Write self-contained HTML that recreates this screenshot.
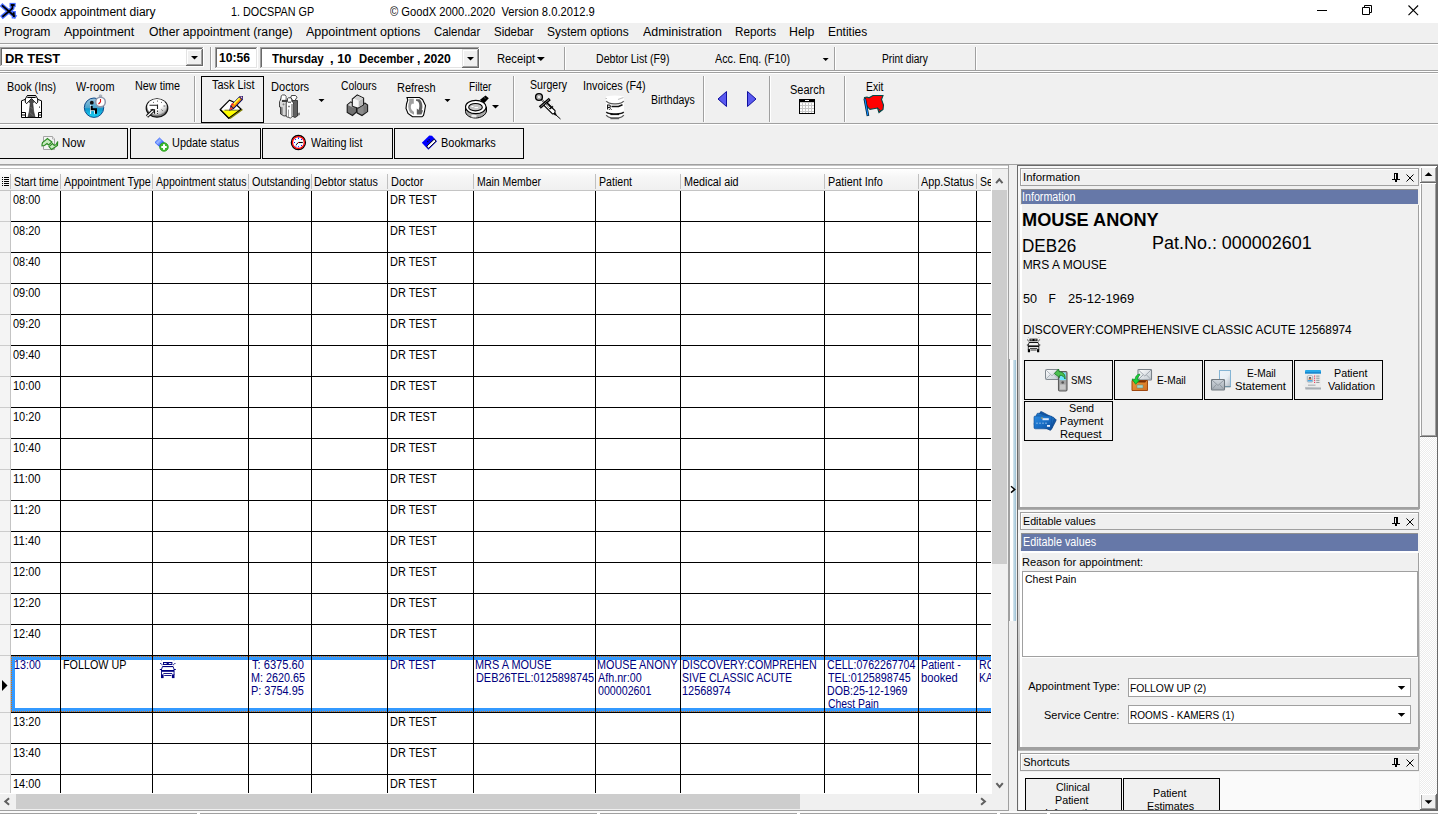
<!DOCTYPE html>
<html><head><meta charset="utf-8"><title>Goodx appointment diary</title>
<style>
html,body{margin:0;padding:0;background:#f0f0f0;overflow:hidden}
#r{position:relative;width:1438px;height:814px;overflow:hidden;background:#f0f0f0;font-family:"Liberation Sans",sans-serif;color:#000}
#r div,#r span,#r svg{position:absolute;display:block}
#r span{white-space:pre;transform-origin:0 0}
</style></head><body><div id="r">
<div style="left:0px;top:0px;width:1438px;height:23px;background:#fff;"></div>
<svg style="left:0px;top:0px" width="18" height="22" viewBox="0 0 18 22" fill="none" stroke-linecap="square" stroke-linejoin="miter">
<g stroke="#3a62ff" stroke-width="4.200" opacity=".92"><path d="M2.600 6 14.300 16M3 16.200 10.800 9.800 12.300 8.300 12.600 5.200M13.800 13V16.300"/><path d="M11.600 5h2" /></g>
<g stroke="#000" stroke-width="1.700"><path d="M2.600 6 14.300 16M3 16.200 10.800 9.800 12.300 8.300 12.600 5.500M13.800 13.200V16.200"/><path d="M11.700 5h2" stroke-width="1.900"/></g>
</svg>
<span style="left:21.05px;top:6px;font-size:12px;line-height:12px;transform:scaleX(1.0040);">Goodx appointment diary</span>
<span style="left:231.03px;top:6px;font-size:12px;line-height:12px;transform:scaleX(0.8988);">1. DOCSPAN GP</span>
<span style="left:389.89px;top:6px;font-size:12px;line-height:12px;transform:scaleX(0.9320);">© GoodX 2000..2020  Version 8.0.2012.9</span>
<svg style="left:1310px;top:0px" width="128" height="23" viewBox="0 0 128 23" fill="none" stroke="#000" stroke-width="1">
<path d="M7 10.5H17"/>
<path d="M52.5 7.5h7v7h-7z M54.5 7.5v-2h7v7h-2"/>
<path d="M98.5 5.5l9.600 9.600M108.100 5.5l-9.600 9.600" stroke-width="1.1"/>
</svg>
<div style="left:0px;top:23px;width:1438px;height:20px;background:#f0f0f0;"></div>
<div style="left:0px;top:43px;width:1438px;height:1px;background:#a0a0a0;"></div>
<div style="left:0px;top:44px;width:1438px;height:1px;background:#fff;"></div>
<span style="left:3.61px;top:26px;font-size:12px;line-height:12px;transform:scaleX(1.0097);">Program</span>
<span style="left:63.70px;top:26px;font-size:12px;line-height:12px;transform:scaleX(1.0430);">Appointment</span>
<span style="left:148.74px;top:26px;font-size:12px;line-height:12px;transform:scaleX(1.0149);">Other appointment (range)</span>
<span style="left:306.20px;top:26px;font-size:12px;line-height:12px;transform:scaleX(1.0456);">Appointment options</span>
<span style="left:433.67px;top:26px;font-size:12px;line-height:12px;transform:scaleX(0.9494);">Calendar</span>
<span style="left:494.10px;top:26px;font-size:12px;line-height:12px;transform:scaleX(0.9570);">Sidebar</span>
<span style="left:547.49px;top:26px;font-size:12px;line-height:12px;transform:scaleX(0.9950);">System options</span>
<span style="left:643.20px;top:26px;font-size:12px;line-height:12px;transform:scaleX(1.0373);">Administration</span>
<span style="left:734.72px;top:26px;font-size:12px;line-height:12px;transform:scaleX(0.9769);">Reports</span>
<span style="left:789.04px;top:26px;font-size:12px;line-height:12px;transform:scaleX(1.0272);">Help</span>
<span style="left:827.68px;top:26px;font-size:12px;line-height:12px;transform:scaleX(0.9954);">Entities</span>
<div style="left:0px;top:45px;width:1438px;height:25px;background:#f0f0f0;"></div>
<div style="left:0px;top:70px;width:1438px;height:1px;background:#a0a0a0;"></div>
<div style="left:0px;top:71px;width:1438px;height:1px;background:#fff;"></div>
<div style="left:0px;top:72px;width:1438px;height:1px;background:#a0a0a0;"></div>
<div style="left:0px;top:73px;width:1438px;height:1px;background:#fff;"></div>
<div style="left:0px;top:47px;width:204px;height:20px;background:#fff;"></div>
<div style="left:0px;top:47px;width:203px;height:19px;background:#a0a0a0;"></div>
<div style="left:1px;top:48px;width:202px;height:18px;background:#e3e3e3;"></div>
<div style="left:1px;top:48px;width:201px;height:17px;background:#696969;"></div>
<div style="left:2px;top:49px;width:200px;height:16px;background:#fff;"></div>
<div style="left:186px;top:49px;width:17px;height:17px;background:#696969;"></div>
<div style="left:186px;top:49px;width:16px;height:16px;background:#e3e3e3;"></div>
<div style="left:187px;top:50px;width:15px;height:15px;background:#a0a0a0;"></div>
<div style="left:187px;top:50px;width:14px;height:14px;background:#fff;"></div>
<div style="left:188px;top:51px;width:13px;height:13px;background:#f0f0f0;"></div>
<span style="left:4.90px;top:52px;font-size:13px;line-height:13px;font-weight:700;transform:scaleX(0.9935);">DR TEST</span>
<div style="left:210px;top:47px;width:1px;height:23px;background:#a0a0a0;"></div>
<div style="left:211px;top:47px;width:1px;height:23px;background:#fff;"></div>
<div style="left:215px;top:47px;width:43px;height:22px;background:#fff;"></div>
<div style="left:215px;top:47px;width:42px;height:21px;background:#a0a0a0;"></div>
<div style="left:216px;top:48px;width:41px;height:20px;background:#e3e3e3;"></div>
<div style="left:216px;top:48px;width:40px;height:19px;background:#696969;"></div>
<div style="left:217px;top:49px;width:39px;height:18px;background:#fff;"></div>
<span style="left:218.67px;top:52px;font-size:12px;line-height:12px;font-weight:700;transform:scaleX(1.0117);">10:56</span>
<div style="left:260px;top:47px;width:220px;height:22px;background:#fff;"></div>
<div style="left:260px;top:47px;width:219px;height:21px;background:#a0a0a0;"></div>
<div style="left:261px;top:48px;width:218px;height:20px;background:#e3e3e3;"></div>
<div style="left:261px;top:48px;width:217px;height:19px;background:#696969;"></div>
<div style="left:262px;top:49px;width:216px;height:18px;background:#fff;"></div>
<div style="left:462px;top:49px;width:17px;height:19px;background:#696969;"></div>
<div style="left:462px;top:49px;width:16px;height:18px;background:#e3e3e3;"></div>
<div style="left:463px;top:50px;width:15px;height:17px;background:#a0a0a0;"></div>
<div style="left:463px;top:50px;width:14px;height:16px;background:#fff;"></div>
<div style="left:464px;top:51px;width:13px;height:15px;background:#f0f0f0;"></div>
<span style="left:272.19px;top:53px;font-size:12px;line-height:12px;font-weight:700;transform:scaleX(0.9576);">Thursday</span>
<span style="left:329.86px;top:53px;font-size:12px;line-height:12px;font-weight:700;transform:scaleX(1.0737);">, 10</span>
<span style="left:359.21px;top:53px;font-size:12px;line-height:12px;font-weight:700;transform:scaleX(0.9470);">December</span>
<span style="left:417.46px;top:53px;font-size:12px;line-height:12px;font-weight:700;transform:scaleX(1.0142);">, 2020</span>
<span style="left:496.79px;top:53px;font-size:12px;line-height:12px;transform:scaleX(0.9369);">Receipt</span>
<div style="left:564px;top:47px;width:1px;height:23px;background:#a0a0a0;"></div>
<div style="left:565px;top:47px;width:1px;height:23px;background:#fff;"></div>
<span style="left:595.89px;top:53px;font-size:12px;line-height:12px;transform:scaleX(0.8813);">Debtor List (F9)</span>
<span style="left:715.20px;top:53px;font-size:12px;line-height:12px;transform:scaleX(0.8999);">Acc. Enq. (F10)</span>
<div style="left:834px;top:47px;width:1px;height:23px;background:#a0a0a0;"></div>
<div style="left:835px;top:47px;width:1px;height:23px;background:#fff;"></div>
<span style="left:882.02px;top:53px;font-size:12px;line-height:12px;transform:scaleX(0.8483);">Print diary</span>
<div style="left:975px;top:47px;width:1px;height:23px;background:#a0a0a0;"></div>
<div style="left:976px;top:47px;width:1px;height:23px;background:#fff;"></div>
<div style="left:0px;top:74px;width:1438px;height:49px;background:#f0f0f0;"></div>
<div style="left:0px;top:123px;width:1438px;height:1px;background:#a0a0a0;"></div>
<div style="left:0px;top:124px;width:1438px;height:1px;background:#fff;"></div>
<div style="left:0px;top:125px;width:1438px;height:39px;background:#f0f0f0;"></div>
<div style="left:194px;top:76px;width:1px;height:46px;background:#a0a0a0;"></div>
<div style="left:195px;top:76px;width:1px;height:46px;background:#fff;"></div>
<div style="left:513px;top:76px;width:1px;height:46px;background:#a0a0a0;"></div>
<div style="left:514px;top:76px;width:1px;height:46px;background:#fff;"></div>
<div style="left:703px;top:76px;width:1px;height:46px;background:#a0a0a0;"></div>
<div style="left:704px;top:76px;width:1px;height:46px;background:#fff;"></div>
<div style="left:769px;top:76px;width:1px;height:46px;background:#a0a0a0;"></div>
<div style="left:770px;top:76px;width:1px;height:46px;background:#fff;"></div>
<div style="left:844px;top:76px;width:1px;height:46px;background:#a0a0a0;"></div>
<div style="left:845px;top:76px;width:1px;height:46px;background:#fff;"></div>
<div style="left:201px;top:76px;width:61px;height:45px;background:#f0f0f0;border:1px solid #000;"></div>
<span style="left:7.38px;top:81px;font-size:12px;line-height:12px;transform:scaleX(0.8983);">Book (Ins)</span>
<span style="left:76.20px;top:81px;font-size:12px;line-height:12px;transform:scaleX(0.9067);">W-room</span>
<span style="left:135.36px;top:80px;font-size:12px;line-height:12px;transform:scaleX(0.9009);">New time</span>
<span style="left:212.20px;top:79px;font-size:12px;line-height:12px;transform:scaleX(0.9085);">Task List</span>
<span style="left:270.81px;top:81px;font-size:12px;line-height:12px;transform:scaleX(0.9223);">Doctors</span>
<span style="left:341.36px;top:80px;font-size:12px;line-height:12px;transform:scaleX(0.8615);">Colours</span>
<span style="left:396.84px;top:82px;font-size:12px;line-height:12px;transform:scaleX(0.9165);">Refresh</span>
<span style="left:468.53px;top:81px;font-size:12px;line-height:12px;transform:scaleX(0.8415);">Filter</span>
<span style="left:529.73px;top:79px;font-size:12px;line-height:12px;transform:scaleX(0.8790);">Surgery</span>
<span style="left:583.08px;top:80px;font-size:12px;line-height:12px;transform:scaleX(0.9032);">Invoices (F4)</span>
<span style="left:650.90px;top:94px;font-size:12px;line-height:12px;transform:scaleX(0.8768);">Birthdays</span>
<span style="left:789.62px;top:84px;font-size:12px;line-height:12px;transform:scaleX(0.9144);">Search</span>
<span style="left:865.91px;top:81px;font-size:12px;line-height:12px;transform:scaleX(0.8678);">Exit</span>
<svg style="left:715px;top:88px" width="46" height="22" viewBox="0 0 46 22">
<polygon points="11.5,3.5 11.5,18.5 3,11" fill="#5a5af0" stroke="#1010a0" stroke-width="1"/>
<polygon points="32.5,3.5 32.5,18.5 41,11" fill="#5a5af0" stroke="#1010a0" stroke-width="1"/></svg>
<div style="left:-1px;top:128px;width:127px;height:29px;background:#f0f0f0;border:1px solid #000;"></div>
<div style="left:130px;top:128px;width:129px;height:29px;background:#f0f0f0;border:1px solid #000;"></div>
<div style="left:262px;top:128px;width:129px;height:29px;background:#f0f0f0;border:1px solid #000;"></div>
<div style="left:394px;top:128px;width:128px;height:29px;background:#f0f0f0;border:1px solid #000;"></div>
<span style="left:61.76px;top:137px;font-size:12px;line-height:12px;transform:scaleX(0.9548);">Now</span>
<span style="left:171.52px;top:137px;font-size:12px;line-height:12px;transform:scaleX(0.9091);">Update status</span>
<span style="left:311.20px;top:137px;font-size:12px;line-height:12px;transform:scaleX(0.8934);">Waiting list</span>
<span style="left:440.86px;top:137px;font-size:12px;line-height:12px;transform:scaleX(0.9115);">Bookmarks</span>
<div style="left:0px;top:164px;width:1438px;height:1px;background:#a0a0a0;"></div>
<div style="left:0px;top:165px;width:1438px;height:1px;background:#c4c4c4;"></div>
<div style="left:0px;top:166px;width:1438px;height:1px;background:#fff;"></div>
<div style="left:0px;top:167px;width:1438px;height:1px;background:#fff;"></div>
<div style="left:0px;top:168px;width:1008px;height:642px;background:#fff;"></div>
<div style="left:0px;top:168px;width:1008px;height:1px;background:#c0c0c0;"></div>
<div style="left:0;top:169px;width:991px;height:21px;background:linear-gradient(#fff,#f6f6f6 40%,#f0f0f0)"></div>
<div style="left:0px;top:190px;width:991px;height:1px;background:#c4c4c4;"></div>
<div style="left:10px;top:174px;width:1px;height:15px;background:#c0c0c0;"></div>
<div style="left:60px;top:174px;width:1px;height:15px;background:#c0c0c0;"></div>
<div style="left:152px;top:174px;width:1px;height:15px;background:#c0c0c0;"></div>
<div style="left:248px;top:174px;width:1px;height:15px;background:#c0c0c0;"></div>
<div style="left:311px;top:174px;width:1px;height:15px;background:#c0c0c0;"></div>
<div style="left:387px;top:174px;width:1px;height:15px;background:#c0c0c0;"></div>
<div style="left:473px;top:174px;width:1px;height:15px;background:#c0c0c0;"></div>
<div style="left:595px;top:174px;width:1px;height:15px;background:#c0c0c0;"></div>
<div style="left:680px;top:174px;width:1px;height:15px;background:#c0c0c0;"></div>
<div style="left:824px;top:174px;width:1px;height:15px;background:#c0c0c0;"></div>
<div style="left:918px;top:174px;width:1px;height:15px;background:#c0c0c0;"></div>
<div style="left:976px;top:174px;width:1px;height:15px;background:#c0c0c0;"></div>
<svg style="left:1px;top:177px" width="8" height="9" viewBox="0 0 8 9" shape-rendering="crispEdges"><g fill="#000">
<rect x="1" y="0" width="1" height="1"/><rect x="3" y="0" width="5" height="1"/>
<rect x="1" y="2" width="1" height="1"/><rect x="3" y="2" width="5" height="1"/>
<rect x="1" y="4" width="1" height="1"/><rect x="3" y="4" width="5" height="1"/>
<rect x="1" y="6" width="1" height="1"/><rect x="3" y="6" width="5" height="1"/>
<rect x="1" y="8" width="1" height="1"/><rect x="3" y="8" width="5" height="1"/></g></svg>
<span style="left:13.74px;top:176px;font-size:12px;line-height:12px;transform:scaleX(0.8701);">Start time</span>
<span style="left:64.20px;top:176px;font-size:12px;line-height:12px;transform:scaleX(0.8997);">Appointment Type</span>
<span style="left:156.20px;top:176px;font-size:12px;line-height:12px;transform:scaleX(0.8807);">Appointment status</span>
<span style="left:251.96px;top:176px;font-size:12px;line-height:12px;transform:scaleX(0.8994);">Outstanding</span>
<span style="left:314.37px;top:176px;font-size:12px;line-height:12px;transform:scaleX(0.8932);">Debtor status</span>
<span style="left:390.85px;top:176px;font-size:12px;line-height:12px;transform:scaleX(0.9142);">Doctor</span>
<span style="left:477.47px;top:176px;font-size:12px;line-height:12px;transform:scaleX(0.8720);">Main Member</span>
<span style="left:598.92px;top:176px;font-size:12px;line-height:12px;transform:scaleX(0.8839);">Patient</span>
<span style="left:684.37px;top:176px;font-size:12px;line-height:12px;transform:scaleX(0.8997);">Medical aid</span>
<span style="left:827.86px;top:176px;font-size:12px;line-height:12px;transform:scaleX(0.9018);">Patient Info</span>
<span style="left:921.20px;top:176px;font-size:12px;line-height:12px;transform:scaleX(0.9018);">App.Status</span>
<div style="left:0;top:0;width:1438px;height:814px;clip-path:polygon(977px 170px,991px 170px,991px 190px,977px 190px)">
<span style="left:979.73px;top:176px;font-size:12px;line-height:12px;transform:scaleX(0.8682);">Service</span>
</div>
<div style="left:0px;top:191px;width:10px;height:602px;background:#f4f4f4;"></div>
<div style="left:10px;top:191px;width:1px;height:602px;background:#c4c4c4;"></div>
<span style="left:13.20px;top:194px;font-size:12px;line-height:12px;transform:scaleX(0.9095);">08:00</span>
<span style="left:389.85px;top:194px;font-size:12px;line-height:12px;transform:scaleX(0.9112);">DR TEST</span>
<div style="left:11px;top:221px;width:980px;height:1px;background:#000;"></div>
<div style="left:0px;top:221px;width:10px;height:1px;background:#cccccc;"></div>
<span style="left:13.20px;top:225px;font-size:12px;line-height:12px;transform:scaleX(0.9095);">08:20</span>
<span style="left:389.85px;top:225px;font-size:12px;line-height:12px;transform:scaleX(0.9112);">DR TEST</span>
<div style="left:11px;top:252px;width:980px;height:1px;background:#000;"></div>
<div style="left:0px;top:252px;width:10px;height:1px;background:#cccccc;"></div>
<span style="left:13.20px;top:256px;font-size:12px;line-height:12px;transform:scaleX(0.9095);">08:40</span>
<span style="left:389.85px;top:256px;font-size:12px;line-height:12px;transform:scaleX(0.9112);">DR TEST</span>
<div style="left:11px;top:283px;width:980px;height:1px;background:#000;"></div>
<div style="left:0px;top:283px;width:10px;height:1px;background:#cccccc;"></div>
<span style="left:13.20px;top:287px;font-size:12px;line-height:12px;transform:scaleX(0.9095);">09:00</span>
<span style="left:389.85px;top:287px;font-size:12px;line-height:12px;transform:scaleX(0.9112);">DR TEST</span>
<div style="left:11px;top:314px;width:980px;height:1px;background:#000;"></div>
<div style="left:0px;top:314px;width:10px;height:1px;background:#cccccc;"></div>
<span style="left:13.20px;top:318px;font-size:12px;line-height:12px;transform:scaleX(0.9095);">09:20</span>
<span style="left:389.85px;top:318px;font-size:12px;line-height:12px;transform:scaleX(0.9112);">DR TEST</span>
<div style="left:11px;top:345px;width:980px;height:1px;background:#000;"></div>
<div style="left:0px;top:345px;width:10px;height:1px;background:#cccccc;"></div>
<span style="left:13.20px;top:349px;font-size:12px;line-height:12px;transform:scaleX(0.9095);">09:40</span>
<span style="left:389.85px;top:349px;font-size:12px;line-height:12px;transform:scaleX(0.9112);">DR TEST</span>
<div style="left:11px;top:376px;width:980px;height:1px;background:#000;"></div>
<div style="left:0px;top:376px;width:10px;height:1px;background:#cccccc;"></div>
<span style="left:12.52px;top:380px;font-size:12px;line-height:12px;transform:scaleX(0.9169);">10:00</span>
<span style="left:389.85px;top:380px;font-size:12px;line-height:12px;transform:scaleX(0.9112);">DR TEST</span>
<div style="left:11px;top:407px;width:980px;height:1px;background:#000;"></div>
<div style="left:0px;top:407px;width:10px;height:1px;background:#cccccc;"></div>
<span style="left:12.52px;top:411px;font-size:12px;line-height:12px;transform:scaleX(0.9169);">10:20</span>
<span style="left:389.85px;top:411px;font-size:12px;line-height:12px;transform:scaleX(0.9112);">DR TEST</span>
<div style="left:11px;top:438px;width:980px;height:1px;background:#000;"></div>
<div style="left:0px;top:438px;width:10px;height:1px;background:#cccccc;"></div>
<span style="left:12.52px;top:442px;font-size:12px;line-height:12px;transform:scaleX(0.9169);">10:40</span>
<span style="left:389.85px;top:442px;font-size:12px;line-height:12px;transform:scaleX(0.9112);">DR TEST</span>
<div style="left:11px;top:469px;width:980px;height:1px;background:#000;"></div>
<div style="left:0px;top:469px;width:10px;height:1px;background:#cccccc;"></div>
<span style="left:13.40px;top:473px;font-size:12px;line-height:12px;transform:scaleX(0.9450);">11:00</span>
<span style="left:389.85px;top:473px;font-size:12px;line-height:12px;transform:scaleX(0.9112);">DR TEST</span>
<div style="left:11px;top:500px;width:980px;height:1px;background:#000;"></div>
<div style="left:0px;top:500px;width:10px;height:1px;background:#cccccc;"></div>
<span style="left:13.40px;top:504px;font-size:12px;line-height:12px;transform:scaleX(0.9450);">11:20</span>
<span style="left:389.85px;top:504px;font-size:12px;line-height:12px;transform:scaleX(0.9112);">DR TEST</span>
<div style="left:11px;top:531px;width:980px;height:1px;background:#000;"></div>
<div style="left:0px;top:531px;width:10px;height:1px;background:#cccccc;"></div>
<span style="left:13.40px;top:535px;font-size:12px;line-height:12px;transform:scaleX(0.9450);">11:40</span>
<span style="left:389.85px;top:535px;font-size:12px;line-height:12px;transform:scaleX(0.9112);">DR TEST</span>
<div style="left:11px;top:562px;width:980px;height:1px;background:#000;"></div>
<div style="left:0px;top:562px;width:10px;height:1px;background:#cccccc;"></div>
<span style="left:12.52px;top:566px;font-size:12px;line-height:12px;transform:scaleX(0.9169);">12:00</span>
<span style="left:389.85px;top:566px;font-size:12px;line-height:12px;transform:scaleX(0.9112);">DR TEST</span>
<div style="left:11px;top:593px;width:980px;height:1px;background:#000;"></div>
<div style="left:0px;top:593px;width:10px;height:1px;background:#cccccc;"></div>
<span style="left:12.52px;top:597px;font-size:12px;line-height:12px;transform:scaleX(0.9169);">12:20</span>
<span style="left:389.85px;top:597px;font-size:12px;line-height:12px;transform:scaleX(0.9112);">DR TEST</span>
<div style="left:11px;top:624px;width:980px;height:1px;background:#000;"></div>
<div style="left:0px;top:624px;width:10px;height:1px;background:#cccccc;"></div>
<span style="left:12.52px;top:628px;font-size:12px;line-height:12px;transform:scaleX(0.9169);">12:40</span>
<span style="left:389.85px;top:628px;font-size:12px;line-height:12px;transform:scaleX(0.9112);">DR TEST</span>
<div style="left:11px;top:655px;width:980px;height:1px;background:#000;"></div>
<div style="left:0px;top:655px;width:10px;height:1px;background:#cccccc;"></div>
<div style="left:11px;top:712px;width:980px;height:1px;background:#000;"></div>
<div style="left:0px;top:712px;width:10px;height:1px;background:#cccccc;"></div>
<span style="left:12.52px;top:716px;font-size:12px;line-height:12px;transform:scaleX(0.9169);">13:20</span>
<span style="left:389.85px;top:716px;font-size:12px;line-height:12px;transform:scaleX(0.9112);">DR TEST</span>
<div style="left:11px;top:743px;width:980px;height:1px;background:#000;"></div>
<div style="left:0px;top:743px;width:10px;height:1px;background:#cccccc;"></div>
<span style="left:12.52px;top:747px;font-size:12px;line-height:12px;transform:scaleX(0.9169);">13:40</span>
<span style="left:389.85px;top:747px;font-size:12px;line-height:12px;transform:scaleX(0.9112);">DR TEST</span>
<div style="left:11px;top:774px;width:980px;height:1px;background:#000;"></div>
<div style="left:0px;top:774px;width:10px;height:1px;background:#cccccc;"></div>
<span style="left:12.52px;top:778px;font-size:12px;line-height:12px;transform:scaleX(0.9169);">14:00</span>
<span style="left:389.85px;top:778px;font-size:12px;line-height:12px;transform:scaleX(0.9112);">DR TEST</span>
<div style="left:11px;top:805px;width:980px;height:1px;background:#000;"></div>
<div style="left:0px;top:805px;width:10px;height:1px;background:#cccccc;"></div>
<div style="left:11px;top:656px;width:980px;height:4px;background:#3399ff;"></div>
<div style="left:11px;top:708px;width:980px;height:4px;background:#3399ff;"></div>
<div style="left:11px;top:656px;width:4px;height:56px;background:#3399ff;"></div>
<div style="left:11px;top:656px;width:980px;height:1px;background:repeating-linear-gradient(90deg,#d87010 0 1px,transparent 1px 2px)"></div>
<div style="left:11px;top:711px;width:980px;height:1px;background:repeating-linear-gradient(90deg,#d87010 0 1px,transparent 1px 2px)"></div>
<div style="left:11px;top:656px;width:1px;height:56px;background:repeating-linear-gradient(180deg,#d87010 0 1px,transparent 1px 2px)"></div>
<div style="left:60px;top:191px;width:1px;height:602px;background:#000;"></div>
<div style="left:152px;top:191px;width:1px;height:602px;background:#000;"></div>
<div style="left:248px;top:191px;width:1px;height:602px;background:#000;"></div>
<div style="left:311px;top:191px;width:1px;height:602px;background:#000;"></div>
<div style="left:387px;top:191px;width:1px;height:602px;background:#000;"></div>
<div style="left:473px;top:191px;width:1px;height:602px;background:#000;"></div>
<div style="left:595px;top:191px;width:1px;height:602px;background:#000;"></div>
<div style="left:680px;top:191px;width:1px;height:602px;background:#000;"></div>
<div style="left:824px;top:191px;width:1px;height:602px;background:#000;"></div>
<div style="left:918px;top:191px;width:1px;height:602px;background:#000;"></div>
<div style="left:976px;top:191px;width:1px;height:602px;background:#000;"></div>
<span style="left:14.01px;top:659px;font-size:12px;line-height:12px;color:#000080;transform:scaleX(0.8928);">13:00</span>
<span style="left:62.87px;top:659px;font-size:12px;line-height:12px;transform:scaleX(0.8969);">FOLLOW UP</span>
<span style="left:252.20px;top:659px;font-size:12px;line-height:12px;color:#000080;transform:scaleX(0.9263);">T: 6375.60</span>
<span style="left:250.86px;top:672px;font-size:12px;line-height:12px;color:#000080;transform:scaleX(0.9012);">M: 2620.65</span>
<span style="left:250.86px;top:685px;font-size:12px;line-height:12px;color:#000080;transform:scaleX(0.9092);">P: 3754.95</span>
<span style="left:389.87px;top:659px;font-size:12px;line-height:12px;color:#000080;transform:scaleX(0.8986);">DR TEST</span>
<span style="left:475.36px;top:659px;font-size:12px;line-height:12px;color:#000080;transform:scaleX(0.9096);">MRS A MOUSE</span>
<span style="left:475.86px;top:672px;font-size:12px;line-height:12px;color:#000080;transform:scaleX(0.9082);">DEB26TEL:0125898745</span>
<span style="left:597.39px;top:659px;font-size:12px;line-height:12px;color:#000080;transform:scaleX(0.9018);">MOUSE ANONY</span>
<span style="left:598.19px;top:672px;font-size:12px;line-height:12px;color:#000080;transform:scaleX(0.8966);">Afh.nr:00</span>
<span style="left:598.21px;top:685px;font-size:12px;line-height:12px;color:#000080;transform:scaleX(0.8885);">000002601</span>
<span style="left:681.88px;top:659px;font-size:12px;line-height:12px;color:#000080;transform:scaleX(0.8909);">DISCOVERY:COMPREHEN</span>
<span style="left:682.24px;top:672px;font-size:12px;line-height:12px;color:#000080;transform:scaleX(0.8775);">SIVE CLASSIC ACUTE</span>
<span style="left:682.02px;top:685px;font-size:12px;line-height:12px;color:#000080;transform:scaleX(0.9107);">12568974</span>
<span style="left:827.30px;top:659px;font-size:12px;line-height:12px;color:#000080;transform:scaleX(0.8825);">CELL:0762267704</span>
<span style="left:828.20px;top:672px;font-size:12px;line-height:12px;color:#000080;transform:scaleX(0.8999);">TEL:0125898745</span>
<span style="left:826.90px;top:685px;font-size:12px;line-height:12px;color:#000080;transform:scaleX(0.8860);">DOB:25-12-1969</span>
<div style="left:0;top:0;width:1438px;height:814px;clip-path:polygon(825px 656px,918px 656px,918px 709px,825px 709px)">
<span style="left:827.87px;top:698px;font-size:12px;line-height:12px;color:#000080;transform:scaleX(0.8668);">Chest Pain</span>
</div>
<span style="left:920.88px;top:659px;font-size:12px;line-height:12px;color:#000080;transform:scaleX(0.8917);">Patient -</span>
<span style="left:921.19px;top:672px;font-size:12px;line-height:12px;color:#000080;transform:scaleX(0.9345);">booked</span>
<div style="left:0;top:0;width:1438px;height:814px;clip-path:polygon(977px 656px,991px 656px,991px 709px,977px 709px)">
<span style="left:978.88px;top:659px;font-size:12px;line-height:12px;color:#000080;transform:scaleX(0.8867);">ROOMS -</span>
<span style="left:978.95px;top:672px;font-size:12px;line-height:12px;color:#000080;transform:scaleX(0.8642);">KAMERS</span>
</div>
<svg style="left:2px;top:680px" width="6" height="11" viewBox="0 0 6 11"><polygon points="0,0 0,11 5.5,5.5" fill="#000"/></svg>
<svg style="left:159px;top:660px" width="18" height="19" viewBox="0 0 18 19" fill="#000080">
<rect x="4" y="2" width="9.400" height="3"/><rect x="5" y="3" width="2.600" height=".9" fill="#fff"/><rect x="9.800" y="3" width="2.600" height=".9" fill="#fff"/>
<rect x="1" y="3" width="1.300" height="1" opacity=".8"/><rect x="2.300" y="4.200" width="1.300" height="1" opacity=".8"/><rect x="15.200" y="3" width="1.300" height="1" opacity=".8"/><rect x="13.900" y="4.200" width="1.300" height="1" opacity=".8"/>
<rect x="2" y=".3" width="1" height=".8" opacity=".35"/><rect x="14.500" y=".3" width="1" height=".8" opacity=".35"/>
<rect x="3.500" y="6" width="10.600" height="1.100"/>
<path d="M3.500 6.500 2.300 10M14.100 6.500 15.300 10" stroke="#000080" stroke-width=".9" fill="none"/>
<rect x=".8" y="9" width="2" height="1"/><rect x="14.800" y="9" width="2" height="1"/>
<rect x="2" y="10" width="13.500" height="1.800"/>
<rect x="2" y="11.500" width=".9" height="3.500"/><rect x="14.600" y="11.500" width=".9" height="3.500"/>
<rect x="4.400" y="13" width="8.800" height=".9"/>
<rect x="5.200" y="15" width="7.200" height=".9"/>
<rect x="2" y="14.400" width="2.600" height="3.700"/><rect x="12.900" y="14.400" width="2.600" height="3.700"/>
</svg>
<div style="left:992px;top:169px;width:16px;height:641px;background:#f0f0f0;"></div>
<div style="left:992px;top:190px;width:15px;height:374px;background:#cdcdcd;"></div>
<div style="left:0px;top:794px;width:992px;height:16px;background:#f0f0f0;"></div>
<div style="left:16px;top:794px;width:784px;height:15px;background:#cdcdcd;"></div>
<svg style="left:0;top:0" width="1438" height="814"><path d="M996.0999999999999 183.1 L999.3 179.29999999999998 L1002.5 183.1" fill="none" stroke="#606060" stroke-width="2.0"/></svg>
<svg style="left:0;top:0" width="1438" height="814"><path d="M996.4 783.1 L999.6 786.9 L1002.8000000000001 783.1" fill="none" stroke="#606060" stroke-width="2.0"/></svg>
<svg style="left:0;top:0" width="1438" height="814"><path d="M9.1 798.3 L5.300000000000001 801.5 L9.1 804.7" fill="none" stroke="#606060" stroke-width="2.0"/></svg>
<svg style="left:0;top:0" width="1438" height="814"><path d="M981.1 798.3 L984.9 801.5 L981.1 804.7" fill="none" stroke="#606060" stroke-width="2.0"/></svg>
<div style="left:0px;top:810px;width:1009px;height:1px;background:#a0a0a0;"></div>
<div style="left:1008px;top:165px;width:1px;height:646px;background:#a0a0a0;"></div>
<div style="left:0px;top:811px;width:1438px;height:2px;background:#fafafa;"></div>
<div style="left:0px;top:813px;width:1438px;height:1px;background:#a0a0a0;"></div>
<div style="left:197px;top:813px;width:3px;height:1px;background:#fff;"></div>
<div style="left:597px;top:813px;width:3px;height:1px;background:#fff;"></div>
<div style="left:797px;top:813px;width:3px;height:1px;background:#fff;"></div>
<div style="left:997px;top:813px;width:3px;height:1px;background:#fff;"></div>
<div style="left:1047px;top:813px;width:3px;height:1px;background:#fff;"></div>
<div style="left:1009px;top:165px;width:8px;height:646px;background:#f0f0f0;"></div>
<div style="left:1009px;top:359px;width:1px;height:262px;background:#a0a0a0;"></div>
<div style="left:1010px;top:360px;width:3px;height:261px;background:#fff;"></div>
<div style="left:1013px;top:360px;width:3px;height:261px;background:linear-gradient(90deg,#d8e8f0,#9cc0d4)"></div>
<svg style="left:0;top:0" width="1438" height="814"><path d="M1011.0 486.2 L1014.8 489.4 L1011.0 492.59999999999997" fill="none" stroke="#000" stroke-width="1.4"/></svg>
<div style="left:1017px;top:165px;width:1px;height:646px;background:#696969;"></div>
<div style="left:1017px;top:165px;width:421px;height:1px;background:#696969;"></div>
<div style="left:1018px;top:166px;width:403px;height:645px;background:#f0f0f0;"></div>
<div style="left:1018px;top:166px;width:401px;height:2px;background:#f8f8f8;"></div>
<div style="left:1018px;top:168px;width:2px;height:21px;background:#f8f8f8;"></div>
<div style="left:1018px;top:189px;width:2px;height:320px;background:linear-gradient(#f8f8f8,#a0a0a0)"></div>
<div style="left:1419px;top:205px;width:1px;height:304px;background:linear-gradient(#fff,#a0a0a0)"></div>
<div style="left:1020px;top:168px;width:397px;height:16px;background:#f0f0f0;border:1px solid #a0a0a0;"></div>
<div style="left:1021px;top:169px;width:397px;height:1px;background:#fff;"></div>
<div style="left:1021px;top:169px;width:1px;height:16px;background:#fff;"></div>
<span style="left:1022.53px;top:172px;font-size:11px;line-height:11px;transform:scaleX(1.0354);">Information</span>
<svg style="left:1392px;top:173px" width="8" height="9" viewBox="0 0 8 9" shape-rendering="crispEdges"><g fill="#000">
<rect x="2" y="0" width="4" height="1"/><rect x="2" y="1" width="1" height="5"/><rect x="4" y="1" width="2" height="5"/><rect x="0" y="6" width="8" height="1"/><rect x="3" y="7" width="1" height="2"/><rect x="3.500" y="7" width="1" height="2"/></g></svg>
<svg style="left:1405.5px;top:173.5px" width="8" height="8" viewBox="0 0 8 8"><path d="M.5 .5l7 7M7.500 .5l-7 7" stroke="#000" stroke-width="1" fill="none"/></svg>
<div style="left:1021px;top:189px;width:397px;height:15px;background:#909090;"></div>
<div style="left:1022px;top:190px;width:396px;height:14px;background:#6678a8;"></div>
<span style="left:1022.15px;top:191px;font-size:12px;line-height:12px;color:#fff;transform:scaleX(0.8914);">Information</span>
<div style="left:1418px;top:205px;width:1px;height:302px;background:#a0a0a0;"></div>
<div style="left:1020px;top:205px;width:2px;height:302px;background:#fff;"></div>
<div style="left:1018px;top:507px;width:401px;height:1px;background:#a0a0a0;"></div>
<div style="left:1018px;top:508px;width:401px;height:1px;background:#a0a0a0;"></div>
<div style="left:1018px;top:509px;width:401px;height:1px;background:#b0b0b0;"></div>
<div style="left:1018px;top:510px;width:401px;height:2px;background:#f8f8f8;"></div>
<div style="left:1018px;top:512px;width:2px;height:21px;background:#f4f4f4;"></div>
<div style="left:1018px;top:533px;width:2px;height:216px;background:linear-gradient(#f8f8f8,#a0a0a0)"></div>
<div style="left:1419px;top:553px;width:1px;height:196px;background:linear-gradient(#fff,#a0a0a0)"></div>
<span style="left:1022.20px;top:212px;font-size:17.5px;line-height:17.5px;font-weight:700;transform:scaleX(1.0385);">MOUSE ANONY</span>
<span style="left:1021.70px;top:238px;font-size:17.5px;line-height:17.5px;transform:scaleX(0.9762);">DEB26</span>
<span style="left:1151.60px;top:235px;font-size:17.5px;line-height:17.5px;transform:scaleX(1.0260);">Pat.No.: 000002601</span>
<span style="left:1022.64px;top:259px;font-size:12px;line-height:12px;">MRS A MOUSE</span>
<span style="left:1022.66px;top:293px;font-size:12px;line-height:12px;transform:scaleX(1.0525);">50</span>
<span style="left:1048.62px;top:293px;font-size:12px;line-height:12px;">F</span>
<span style="left:1067.96px;top:293px;font-size:12px;line-height:12px;transform:scaleX(1.0777);">25-12-1969</span>
<span style="left:1022.68px;top:324px;font-size:12px;line-height:12px;transform:scaleX(0.9862);">DISCOVERY:COMPREHENSIVE CLASSIC ACUTE 12568974</span>
<svg style="left:1026px;top:336.6px" width="15.5" height="16" viewBox="0 0 18 19" fill="#000">
<rect x="4" y="2" width="9.400" height="3"/><rect x="5" y="3" width="2.600" height=".9" fill="#f0f0f0"/><rect x="9.800" y="3" width="2.600" height=".9" fill="#f0f0f0"/>
<rect x="1" y="3" width="1.300" height="1" opacity=".8"/><rect x="2.300" y="4.200" width="1.300" height="1" opacity=".8"/><rect x="15.200" y="3" width="1.300" height="1" opacity=".8"/><rect x="13.900" y="4.200" width="1.300" height="1" opacity=".8"/>
<rect x="2" y=".3" width="1" height=".8" opacity=".35"/><rect x="14.500" y=".3" width="1" height=".8" opacity=".35"/>
<rect x="3.500" y="6" width="10.600" height="1.100"/>
<path d="M3.500 6.500 2.300 10M14.100 6.500 15.300 10" stroke="#000" stroke-width=".9" fill="none"/>
<rect x=".8" y="9" width="2" height="1"/><rect x="14.800" y="9" width="2" height="1"/>
<rect x="2" y="10" width="13.500" height="1.800"/>
<rect x="2" y="11.500" width=".9" height="3.500"/><rect x="14.600" y="11.500" width=".9" height="3.500"/>
<rect x="4.400" y="13" width="8.800" height=".9"/>
<rect x="5.200" y="15" width="7.200" height=".9"/>
<rect x="2" y="14.400" width="2.600" height="3.700"/><rect x="12.900" y="14.400" width="2.600" height="3.700"/>
</svg>
<div style="left:1024px;top:360px;width:87px;height:38px;background:#f0f0f0;border:1px solid #000;"></div>
<div style="left:1114px;top:360px;width:87px;height:38px;background:#f0f0f0;border:1px solid #000;"></div>
<div style="left:1204px;top:360px;width:87px;height:38px;background:#f0f0f0;border:1px solid #000;"></div>
<div style="left:1294px;top:360px;width:87px;height:38px;background:#f0f0f0;border:1px solid #000;"></div>
<div style="left:1024px;top:401px;width:87px;height:38px;background:#f0f0f0;border:1px solid #000;"></div>
<span style="left:1071.01px;top:375px;font-size:11px;line-height:11px;transform:scaleX(0.8786);">SMS</span>
<span style="left:1156.52px;top:375px;font-size:11px;line-height:11px;transform:scaleX(0.9240);">E-Mail</span>
<span style="left:1246.79px;top:368px;font-size:11px;line-height:11px;transform:scaleX(0.9240);">E-Mail</span>
<span style="left:1235.24px;top:381px;font-size:11px;line-height:11px;transform:scaleX(1.0159);">Statement</span>
<span style="left:1333.62px;top:368px;font-size:11px;line-height:11px;transform:scaleX(0.9756);">Patient</span>
<span style="left:1328.20px;top:381px;font-size:11px;line-height:11px;transform:scaleX(0.9888);">Validation</span>
<span style="left:1068.57px;top:403px;font-size:11px;line-height:11px;transform:scaleX(0.9759);">Send</span>
<span style="left:1059.85px;top:416px;font-size:11px;line-height:11px;">Payment</span>
<span style="left:1060.29px;top:429px;font-size:11px;line-height:11px;transform:scaleX(1.0162);">Request</span>
<div style="left:1020px;top:512px;width:397px;height:16px;background:#f0f0f0;border:1px solid #a0a0a0;"></div>
<div style="left:1021px;top:513px;width:397px;height:1px;background:#fff;"></div>
<div style="left:1021px;top:513px;width:1px;height:16px;background:#fff;"></div>
<span style="left:1022.88px;top:516px;font-size:11px;line-height:11px;transform:scaleX(0.9749);">Editable values</span>
<svg style="left:1392px;top:517px" width="8" height="9" viewBox="0 0 8 9" shape-rendering="crispEdges"><g fill="#000">
<rect x="2" y="0" width="4" height="1"/><rect x="2" y="1" width="1" height="5"/><rect x="4" y="1" width="2" height="5"/><rect x="0" y="6" width="8" height="1"/><rect x="3" y="7" width="1" height="2"/><rect x="3.500" y="7" width="1" height="2"/></g></svg>
<svg style="left:1405.5px;top:517.5px" width="8" height="8" viewBox="0 0 8 8"><path d="M.5 .5l7 7M7.500 .5l-7 7" stroke="#000" stroke-width="1" fill="none"/></svg>
<div style="left:1021px;top:533px;width:397px;height:15px;background:#909090;"></div>
<div style="left:1022px;top:534px;width:396px;height:14px;background:#6678a8;"></div>
<span style="left:1022.85px;top:536px;font-size:12px;line-height:12px;color:#fff;transform:scaleX(0.8974);">Editable values</span>
<div style="left:1021px;top:548px;width:397px;height:3px;background:#6678a8;"></div>
<div style="left:1418px;top:553px;width:1px;height:194px;background:#a0a0a0;"></div>
<span style="left:1021.82px;top:557px;font-size:11px;line-height:11px;transform:scaleX(1.0059);">Reason for appointment:</span>
<div style="left:1022px;top:571px;width:394px;height:84px;background:#fff;border:1px solid #a0a0a0;"></div>
<div style="left:1022px;top:657px;width:396px;height:1px;background:#fff;"></div>
<div style="left:1020px;top:551px;width:398px;height:2px;background:#fff;"></div>
<span style="left:1025.29px;top:574px;font-size:11px;line-height:11px;transform:scaleX(0.9516);">Chest Pain</span>
<span style="left:1028.20px;top:681px;font-size:11px;line-height:11px;">Appointment Type:</span>
<span style="left:1044.26px;top:710px;font-size:11px;line-height:11px;transform:scaleX(0.9944);">Service Centre:</span>
<div style="left:1128px;top:678px;width:281px;height:17px;background:#fff;border:1px solid #a0a0a0;"></div>
<div style="left:1128px;top:705px;width:281px;height:17px;background:#fff;border:1px solid #a0a0a0;"></div>
<span style="left:1129.97px;top:683px;font-size:11px;line-height:11px;transform:scaleX(0.9397);">FOLLOW UP (2)</span>
<span style="left:1130.10px;top:710px;font-size:11px;line-height:11px;transform:scaleX(0.9122);">ROOMS - KAMERS (1)</span>
<div style="left:1020px;top:553px;width:2px;height:194px;background:#fff;"></div>
<div style="left:1018px;top:747px;width:401px;height:1px;background:#a0a0a0;"></div>
<div style="left:1018px;top:748px;width:401px;height:1px;background:#a0a0a0;"></div>
<div style="left:1018px;top:749px;width:401px;height:1px;background:#a0a0a0;"></div>
<div style="left:1018px;top:750px;width:401px;height:1px;background:#b8b8b8;"></div>
<div style="left:1018px;top:751px;width:401px;height:2px;background:#f8f8f8;"></div>
<div style="left:1018px;top:753px;width:2px;height:19px;background:#f4f4f4;"></div>
<div style="left:1018px;top:772px;width:2px;height:38px;background:#f0f0f0;"></div>
<div style="left:1020px;top:753px;width:397px;height:16px;background:#f0f0f0;border:1px solid #a0a0a0;"></div>
<div style="left:1021px;top:754px;width:397px;height:1px;background:#fff;"></div>
<div style="left:1021px;top:754px;width:1px;height:16px;background:#fff;"></div>
<span style="left:1023.25px;top:757px;font-size:11px;line-height:11px;">Shortcuts</span>
<svg style="left:1392px;top:758px" width="8" height="9" viewBox="0 0 8 9" shape-rendering="crispEdges"><g fill="#000">
<rect x="2" y="0" width="4" height="1"/><rect x="2" y="1" width="1" height="5"/><rect x="4" y="1" width="2" height="5"/><rect x="0" y="6" width="8" height="1"/><rect x="3" y="7" width="1" height="2"/><rect x="3.500" y="7" width="1" height="2"/></g></svg>
<svg style="left:1405.5px;top:758.5px" width="8" height="8" viewBox="0 0 8 8"><path d="M.5 .5l7 7M7.500 .5l-7 7" stroke="#000" stroke-width="1" fill="none"/></svg>
<div style="left:1019px;top:772px;width:400px;height:38px;background:#fafafa;"></div>
<div style="left:0;top:0;width:1438px;height:814px;clip-path:polygon(1018px 772px,1419px 772px,1419px 810px,1018px 810px)">
<div style="left:1025px;top:778px;width:95px;height:38px;background:#f0f0f0;border:1px solid #000;"></div>
<div style="left:1123px;top:778px;width:95px;height:38px;background:#f0f0f0;border:1px solid #000;"></div>
<span style="left:1055.60px;top:782px;font-size:11px;line-height:11px;transform:scaleX(0.9574);">Clinical</span>
<span style="left:1055.14px;top:795px;font-size:11px;line-height:11px;transform:scaleX(0.9756);">Patient</span>
<span style="left:1044.58px;top:808px;font-size:11px;line-height:11px;transform:scaleX(0.9841);">Information</span>
<span style="left:1153.14px;top:788px;font-size:11px;line-height:11px;transform:scaleX(0.9756);">Patient</span>
<span style="left:1146.86px;top:801px;font-size:11px;line-height:11px;transform:scaleX(0.9737);">Estimates</span>
</div>
<div style="left:1017px;top:810px;width:421px;height:1px;background:#696969;"></div>
<div style="left:1420px;top:167px;width:17px;height:644px;background:#f8f8f8;"></div>
<div style="left:1420px;top:437px;width:17px;height:357px;background:repeating-conic-gradient(#fff 0% 25%,#ececec 0% 50%) 0 0/2px 2px"></div>
<div style="left:1420px;top:167px;width:17px;height:16px;background:#696969;"></div>
<div style="left:1420px;top:167px;width:16px;height:15px;background:#fff;"></div>
<div style="left:1421px;top:168px;width:15px;height:14px;background:#a0a0a0;"></div>
<div style="left:1422px;top:168px;width:13px;height:13px;background:#f0f0f0;"></div>
<div style="left:1420px;top:183px;width:17px;height:254px;background:#696969;"></div>
<div style="left:1420px;top:183px;width:16px;height:253px;background:#fff;"></div>
<div style="left:1421px;top:184px;width:15px;height:252px;background:#a0a0a0;"></div>
<div style="left:1422px;top:184px;width:13px;height:251px;background:#f0f0f0;"></div>
<div style="left:1420px;top:794px;width:17px;height:16px;background:#696969;"></div>
<div style="left:1420px;top:794px;width:16px;height:15px;background:#fff;"></div>
<div style="left:1421px;top:795px;width:15px;height:14px;background:#a0a0a0;"></div>
<div style="left:1422px;top:795px;width:13px;height:13px;background:#f0f0f0;"></div>
<svg style="left:0;top:0" width="1438" height="814"><polygon points="1424.7,176 1432.3,176 1428.5,172.2" fill="#000"/><polygon points="1424.7,800.2 1432.3,800.2 1428.5,804" fill="#000"/></svg>
<div style="left:1437px;top:165px;width:1px;height:646px;background:#696969;"></div>
<div style="left:1017px;top:810px;width:421px;height:1px;background:#696969;"></div>
<svg style="left:0;top:0" width="1438" height="814"><polygon points="191.0,56 198.0,56 194.5,59.5" fill="#000"/></svg>
<svg style="left:0;top:0" width="1438" height="814"><polygon points="467.0,57 474.0,57 470.5,60.5" fill="#000"/></svg>
<svg style="left:0;top:0" width="1438" height="814"><polygon points="536.8,57 544.8,57 540.8,61.0" fill="#000"/></svg>
<svg style="left:0;top:0" width="1438" height="814"><polygon points="822.7,58 828.7,58 825.7,61.0" fill="#000"/></svg>
<svg style="left:0;top:0" width="1438" height="814"><polygon points="318.5,99 324.5,99 321.5,102.0" fill="#000"/></svg>
<svg style="left:0;top:0" width="1438" height="814"><polygon points="444.5,99 450.5,99 447.5,102.0" fill="#000"/></svg>
<svg style="left:0;top:0" width="1438" height="814"><polygon points="492.0,105 499.0,105 495.5,108.5" fill="#000"/></svg>
<svg style="left:0;top:0" width="1438" height="814"><polygon points="1397.75,686 1405.25,686 1401.5,689.75" fill="#000"/></svg>
<svg style="left:0;top:0" width="1438" height="814"><polygon points="1397.75,713 1405.25,713 1401.5,716.75" fill="#000"/></svg>
<!-- Book (shirt & tie) 21,95 21x23 -->
<svg style="left:21px;top:95px" width="21" height="23" viewBox="0 0 21 23">
<path d="M.5 22.5V5.8L4 4.5 6.3.6h8.4L17 4.5l3.500 1.300V22.500Z" fill="#fff" stroke="#000"/>
<path d="M6.3 .6h8.400M6.300 2.500h8.400" stroke="#000" fill="none"/>
<path d="M4.300 4V7.200L5.600 8.700 10.500 3.600 15.400 8.700 16.700 7.200V4" fill="none" stroke="#000"/>
<path d="M10.500 3.900 13 6.800 11.800 8.300 12.600 16 14 22H7L8.400 16 9.200 8.300 8 6.800Z" fill="#4a4a4a" stroke="#2a2a2a" stroke-width=".6"/>
<path d="M9.500 12 12 14.500M8.600 17.500 12.600 21" stroke="#777" stroke-width=".8"/>
<path d="M.800 17.500H4.500V22M.800 20H4.500M17.500 22V17.500H20.200M17.500 20H20.200" fill="none" stroke="#000"/>
<rect x="18" y="11.600" width="1" height="1" fill="#000"/>
</svg>
<!-- W-room -->
<svg style="left:82px;top:94px" width="26" height="25" viewBox="0 0 26 25">
<defs><linearGradient id="wr1" x1="0" y1="0" x2="0" y2="1"><stop offset="0" stop-color="#9fc4dc"/><stop offset=".5" stop-color="#4aa4cc"/><stop offset=".55" stop-color="#1098cc"/><stop offset="1" stop-color="#18d0f4"/></linearGradient></defs>
<circle cx="12" cy="13.700" r="9.700" fill="url(#wr1)" stroke="#0e4a8a" stroke-width="1"/>
<path d="M8.600 11v9M8.600 16.600h4v3.600" stroke="#e8f8ff" stroke-width="1" fill="none"/>
<circle cx="9.800" cy="8.700" r="1.900" fill="#111"/>
<path d="M9.700 12v3.200h4.300v4.600" stroke="#000" stroke-width="2" fill="none"/>
<rect x="17.300" y="1" width="2.400" height="2" rx=".6" fill="#c8ccd4" stroke="#8890a0" stroke-width=".7"/>
<circle cx="18.500" cy="8" r="4.800" fill="#fff" stroke="#9098ac" stroke-width="1.500"/>
<path d="M18.500 8V5M18.500 8l-2 2" stroke="#e01010" stroke-width="1.100"/>
</svg>
<!-- New time -->
<svg style="left:145px;top:97px" width="25" height="23" viewBox="0 0 25 23">
<defs><linearGradient id="nt1" x1="0" y1="0" x2="1" y2="1"><stop offset="0" stop-color="#fff"/><stop offset=".6" stop-color="#fff"/><stop offset="1" stop-color="#8c8c8c"/></linearGradient></defs>
<ellipse cx="12" cy="11" rx="10.800" ry="9.200" fill="#7c7c7c" stroke="#111" stroke-width="1.200"/>
<ellipse cx="12" cy="9.800" rx="9.800" ry="7.900" fill="url(#nt1)"/>
<path d="M4.500 8.300H12.500M12.500 7.500V12" stroke="#222" stroke-width="1.100"/><path d="M12.500 13.500V17" stroke="#333" stroke-width="1.100" stroke-dasharray="1.500 1"/>
<path d="M8 5l1 .8M12.500 3.500v1.200M17 5l-1 .8M18.500 9h1.800M16.500 12.500l1.200 1.300" stroke="#666" stroke-width="1"/>
<path d="M2 19.500 8.800 13" stroke="#111" stroke-width="3.200"/><path d="M2.300 19.300 8.600 13.200" stroke="#fff" stroke-width="1.300"/>
<path d="M5.500 12.800H9.500V16.800" fill="none" stroke="#111" stroke-width="1.200"/>
</svg>
<!-- Task list -->
<svg style="left:219px;top:94px" width="26" height="26" viewBox="0 0 26 26">
<path d="M10.500 6.200 1.200 15.500 9.800 24.200 22.200 15.300 14 7.800Z" fill="#fff" stroke="#000" stroke-width="1.200"/>
<path d="M4 16.500H20.500L22.200 15.300 11 24.300 9.800 24.200 2.600 17Z" fill="#ffff00"/>
<path d="M5.500 16.200H20" stroke="#808000" stroke-width="1"/>
<path d="M1.200 15.500 9.800 24.200 22.200 15.300" fill="none" stroke="#000" stroke-width="1.400"/>
<path d="M11 24.600 23.500 15.600" stroke="#808000" stroke-width="1.200"/>
<path d="M10.200 16.800 11.500 11.500 20.500 2.200 24 2 23.800 5.800 14.800 15Z" fill="#000060"/>
<path d="M12.300 11.800 20.300 3.500 22.600 5.600 14.500 13.800Z" fill="#ffb000"/>
<path d="M13.200 11.500 20.600 4" stroke="#ffff40" stroke-width="1.300"/>
<path d="M14 13.200 21.800 5.300" stroke="#ff6000" stroke-width="1" stroke-dasharray="1.200 .8"/>
<path d="M21 2.800 23.300 2.600 23.200 5Z" fill="#ffc0c8"/>
<path d="M11.600 12.500 14 14.600 10.700 16.300Z" fill="#ff5030"/>
<circle cx="13.500" cy="10.500" r="1.300" fill="#ff3020"/>
</svg>
<!-- Doctors -->
<svg style="left:278px;top:94px" width="24" height="26" viewBox="0 0 24 26">
<path d="M15.500 20 22 18.500 22 21 16 23Z" fill="#808080"/>
<path d="M14 6.500H19.500V22L17 23.500 14 22Z" fill="#606060" stroke="#303030" stroke-width=".9"/>
<path d="M13.500 1.500H17.500L19 3.200 17 6.500H14.500L12.800 3.500Z" fill="#fff" stroke="#303030" stroke-width=".9"/>
<path d="M2 7 3 4 3.300 1.800 4.500 1H7L8 2V6L9 7.500V21.500L6 22 2.500 20V13H1.500V7.500Z" fill="#d8d8d8" stroke="#303030" stroke-width=".9"/>
<rect x="3.800" y="1.700" width="3.700" height="3.800" fill="#fff"/>
<path d="M4 6h5v2H4z" fill="#404040"/>
<path d="M3.900 13.200V20.500" stroke="#303030" stroke-width=".9"/>
<path d="M8.200 8.500 9.500 7.500V4.500L10.500 3.800H13L13.800 5V7.500L15.500 8.500V21.500L12.500 24 10.500 23.500 8.200 22.500Z" fill="#fff" stroke="#303030" stroke-width=".9"/>
<path d="M13 10H15.200V21.500L13 23Z" fill="#a8a8a8"/>
<path d="M10.500 15.500V23" stroke="#909090" stroke-width=".9"/>
<path d="M9.800 8.200h3.200" stroke="#303030" stroke-width="1"/>
<path d="M4.500 10.400h2M5.500 9.400v2M10 12.500h2M11 11.500v2" stroke="#808080" stroke-width=".9"/>
</svg>
<!-- Colours (cubes) -->
<svg style="left:346px;top:94px" width="23" height="23" viewBox="0 0 23 23">
<path d="M1.200 11 4.800 8 10.500 11.500 10.500 18 6.500 21.500 1.200 18.500Z" fill="#707070" stroke="#1a1a1a" stroke-width="1.100"/>
<path d="M1.800 11 4.800 8.600 10 11.500 7 13.600Z" fill="#d0d0d0"/>
<path d="M11 18.800 11 12 19 9 21.600 11 21.600 17.500 16 21.500Z" fill="#8c8c8c" stroke="#1a1a1a" stroke-width="1.100"/>
<path d="M17.500 12.500 21 10.800 21 17.200 17.500 19.800Z" fill="#787878"/>
<path d="M11.300 1 17.600 4 17.600 10.700 12 14.200 6.300 12.200 6.300 5Z" fill="#f6f6f6" stroke="#1a1a1a" stroke-width="1.100"/>
<path d="M11.300 1.700 17 4.300 12.600 6.800 8 4.600Z" fill="#d0d0d0"/>
<path d="M12.700 7 17 4.600 17 10.400 12.700 13.200Z" fill="#b8b8b8"/>
</svg>
<!-- Refresh -->
<svg style="left:405px;top:96px" width="22" height="22" viewBox="0 0 22 22">
<path d="M2 1.500H14.500L17.500 3.500 20.500 9.500 19.500 15.500 18.500 19.500 17 20.800H7.500L3 17.500 1 12.500 1.500 8 2.800 4Z" fill="#fff" stroke="#000" stroke-width="1.100" stroke-dasharray="20 0"/>
<path d="M4.200 2.800H8.800V7.800H6.800C5.500 9.500 5.500 12.500 6.800 14L9 16V18.800L5 16.500C2.800 13 2.800 8.500 4.200 5.500Z" fill="#a0a0a0"/>
<path d="M11 3.200H14.500C17.500 5.500 18 11 16.800 14L18 14.500 16.500 18.500H11.800V12.500L13.600 14C14.800 11 14.500 7 13 5.500L11 4.800Z" fill="#606060"/>
</svg>
<!-- Filter (magnifier) -->
<svg style="left:464px;top:94px" width="26" height="25" viewBox="0 0 26 25">
<path d="M16 5.800 21.500 1.500 24.800 4.200 19.800 9.500Z" fill="#000"/><path d="M20 3.500l1.500 1" stroke="#666" stroke-width=".8"/>
<path d="M1.500 13V17.500C1.500 21 6 24 11.500 24S22 21 22.500 17V13Z" fill="#a8a8a8" stroke="#000" stroke-width="1"/>
<path d="M7.500 20.800h5v2.600h-5z" fill="#ececec"/>
<ellipse cx="11.800" cy="13" rx="10.300" ry="6.600" fill="#fff" stroke="#000" stroke-width="1.100"/>
<ellipse cx="11.500" cy="13.200" rx="6.800" ry="3.700" fill="#c4c4c4" stroke="#000" stroke-width="1.100"/>
<path d="M7.500 12.500h2M10.500 13.600h3.500" stroke="#fff" stroke-width="1"/>
</svg>
<!-- Surgery (syringe) -->
<svg style="left:534px;top:92px" width="28" height="28" viewBox="0 0 28 28">
<circle cx="5" cy="5" r="3.400" fill="#b0b0b0" stroke="#000" stroke-width="1.400"/><circle cx="5" cy="5" r="1.100" fill="#fff"/>
<path d="M7.500 7.500 12 12" stroke="#000" stroke-width="1.600" stroke-dasharray="1 .7"/>
<path d="M5.800 15.500 15.800 7" stroke="#000" stroke-width="3"/><path d="M6.500 14.900 15 7.600" stroke="#909090" stroke-width="1"/>
<path d="M12.500 10.500 21 18.500C21.500 21 20.500 22 18.500 22L10 13.500Z" fill="#fff" stroke="#000" stroke-width="1.100"/>
<path d="M11 12 13.500 10M12 13.200 14.800 11M13.200 14.300 16 12M14.400 15.400 17.200 13.100M15.600 16.500 18.300 14.200" stroke="#000" stroke-width=".8"/>
<path d="M15 16.500 18.500 14 19.500 15 16 17.600Z" fill="#000"/>
<path d="M20 21 22 23" stroke="#000" stroke-width="2"/>
<path d="M22 23 26.500 27" stroke="#000" stroke-width="1"/>
</svg>
<!-- Invoices (bottle) -->
<svg style="left:604px;top:94px" width="22" height="26" viewBox="0 0 22 26">
<path d="M2 2.500Q11 .5 20 2.500V22.500Q11 26 2 22.500Z" fill="#fff"/>
<path d="M1.500 4.500h1.500M14 5.500l5.500-2" stroke="#c0c0c0" stroke-width="1.200"/>
<path d="M2.300 7Q4 10 11 9.800 18 10 19.700 7" fill="none" stroke="#5a5a5a" stroke-width="1.300"/>
<path d="M2.300 18Q4 20 11 19.800 18 20 19.700 18" fill="none" stroke="#111" stroke-width="1.300"/><path d="M6.500 20.500h8.500" stroke="#111" stroke-width="1.200"/>
<path d="M2.300 21Q4 24.200 11 24 18 24.200 19.700 21" fill="none" stroke="#5a5a5a" stroke-width="1.400"/><path d="M6.500 24.600h8.500" stroke="#5a5a5a" stroke-width="1.200"/>
<path d="M3.600 15.500V11H5.300Q6.300 11 6.300 12.200 6.300 13.500 5.300 13.500H3.600" fill="none" stroke="#111" stroke-width="1.100"/>
<path d="M5.200 15.800 6.400 14.500 7.600 15.800" fill="none" stroke="#111" stroke-width=".9"/>
<path d="M7.500 12.500H14.500L18.500 10.800" fill="none" stroke="#111" stroke-width="1.500"/>
</svg>
<!-- Search (calendar) -->
<svg style="left:799px;top:99px" width="16" height="15" viewBox="0 0 16 15" shape-rendering="crispEdges">
<defs><pattern id="ck" width="3" height="3" patternUnits="userSpaceOnUse"><rect width="3" height="3" fill="#c8c8c8"/><rect x="1" y="1" width="2" height="2" fill="#fff"/></pattern></defs>
<rect x="0" y="0" width="16" height="15" fill="#000"/><rect x="1" y="3" width="14" height="11" fill="url(#ck)"/><rect x="6" y="1" width="4" height="1" fill="#fff"/>
</svg>
<!-- Exit (flag) -->
<svg style="left:862px;top:93px" width="24" height="25" viewBox="0 0 24 25">
<path d="M2.500 4.500 5 4 7 4.800 11 2.500H21L19.500 6.500 21.500 12 21 16.500 17 19.500 15.500 15 8 16.300 5 13.500Z" fill="#ff0000" stroke="#004848" stroke-width="1.100"/>
<path d="M15.500 15 18.800 17.800" stroke="#004848" stroke-width="1"/>
<path d="M2.700 5.500 6 23" stroke="#002030" stroke-width="2.600"/><path d="M2.900 6 5.900 22.500" stroke="#1088ff" stroke-width="1.200"/>
</svg>
<!-- Now -->
<svg style="left:41px;top:135px" width="18" height="16" viewBox="0 0 18 16">
<path d="M2.500 14.500V1.500H11.500L13.500 4V14.500Z" fill="#f4f4f4" stroke="#a4a4a4" stroke-width="1"/>
<path d="M11.500 1.500V4H13.500" fill="#fff" stroke="#a4a4a4" stroke-width=".8"/>
<path d="M1 9.500 1.500 7.500 6.500 3.500 8 4.800 11 7 7.500 10 6 8.500 3.500 10.500 1 10.800Z" fill="#c8ecc0" stroke="#2a8a20" stroke-width="1.100"/>
<path d="M16.700 6.500 16.500 10.500 12 13.500 10.500 14.500 8 11.500 11.500 8.500 13.200 10.300 15 9.800Z" fill="#c8ecc0" stroke="#2a8a20" stroke-width="1.100"/>
</svg>
<!-- Update status -->
<svg style="left:154px;top:137px" width="16" height="16" viewBox="0 0 16 16">
<defs><linearGradient id="us1" x1="0" y1="0" x2="1" y2="1"><stop offset="0" stop-color="#3a68ff"/><stop offset=".4" stop-color="#9ab8ff"/><stop offset=".7" stop-color="#2a58ff"/><stop offset="1" stop-color="#2a58ff"/></linearGradient></defs>
<path d="M5.500 1 1 5.400 6.200 10.200 10.200 5.600Z" fill="url(#us1)" stroke="#2c5cff" stroke-width=".8"/>
<circle cx="10" cy="10" r="4.300" fill="#3cb82c" stroke="#2ca01c" stroke-width=".8"/>
<path d="M10 7.300v5.400M7.300 10h5.400" stroke="#fff" stroke-width="2"/>
</svg>
<!-- Waiting list -->
<svg style="left:290px;top:134px" width="17" height="17" viewBox="0 0 17 17">
<circle cx="8.400" cy="8.500" r="7" fill="#f4ffff" stroke="#000" stroke-width="1.400"/>
<circle cx="8.400" cy="8.500" r="5.900" fill="none" stroke="#ff0000" stroke-width="1.300"/>
<g fill="#1010ff"><rect x="8" y="3.400" width="1" height="1.600"/><rect x="8" y="12.200" width="1" height="1"/><rect x="4" y="8" width="1" height="1"/><rect x="5" y="5" width="1" height="1"/><rect x="11" y="5" width="1" height="1"/><rect x="11" y="11" width="1" height="1"/><rect x="5.500" y="11.500" width="1" height="1"/></g>
<path d="M8.400 8.500H12.800" stroke="#000" stroke-width="1.100"/><path d="M8.400 8.500 6 10.800" stroke="#000" stroke-width="1"/><rect x="8" y="8" width="1" height="1" fill="#e00"/>
</svg>
<!-- Bookmarks -->
<svg style="left:421px;top:135px" width="17" height="16" viewBox="0 0 17 16">
<path d="M8.300 .6 11 .8 16 6.200 7.400 14.800 .8 7.800Z" fill="#0000ff"/>
<path d="M5.800 11.200 13.200 4.200 15 6.200 7.500 13.400Z" fill="#fff" stroke="#000" stroke-width=".9"/>
<rect x="7.500" y="4" width="1.400" height="1.400" fill="#000060"/><rect x="6" y="5.800" width="1.400" height="1.400" fill="#000060"/>
</svg>
<!-- SMS -->
<svg style="left:1044px;top:367px" width="25" height="25" viewBox="0 0 25 25">
<defs><linearGradient id="ev" x1="0" y1="0" x2="1" y2="1"><stop offset="0" stop-color="#ffffff"/><stop offset="1" stop-color="#c0c8d0"/></linearGradient></defs>
<rect x="1.500" y="2.500" width="13.500" height="10" rx=".8" fill="url(#ev)" stroke="#80888f" stroke-width="1"/>
<path d="M2 3 8 8.800 14.500 3M2 12 6.500 7.500M14.500 12 10 7.500" fill="none" stroke="#a8b0b8" stroke-width=".9"/>
<rect x="14.500" y="4.500" width="8.500" height="19.500" rx="1.200" fill="#a4a4a4" stroke="#5c5c5c" stroke-width="1.100"/>
<rect x="15.700" y="5.600" width="6.100" height="7.500" fill="#6ce4ff"/>
<circle cx="18.700" cy="15.500" r="1.300" fill="#555"/>
<rect x="16" y="17.500" width="5.500" height="5" fill="#c8c8c8"/>
<path d="M14.500 2 10.300 6.500 15.500 10.500 15.700 8.300C18.500 8.300 20 9.500 21 12 21.500 8 19.500 5 15 4.600Z" fill="#4cc050" stroke="#1e7a2c" stroke-width=".9"/>
</svg>
<!-- E-Mail -->
<svg style="left:1130px;top:367px" width="24" height="25" viewBox="0 0 24 25">
<defs><linearGradient id="bx" x1="0" y1="0" x2="1" y2="1"><stop offset="0" stop-color="#f09838"/><stop offset="1" stop-color="#d07020"/></linearGradient></defs>
<rect x="8" y="2.500" width="13.500" height="10.500" rx=".8" fill="url(#ev)" stroke="#788088" stroke-width="1.100"/>
<path d="M8.500 3 14.800 9 21 3M8.500 12.500 13 8M21 12.500 16.600 8" fill="none" stroke="#98a0a8" stroke-width=".9"/>
<path d="M2 13.500H17.500V23.500H2Z" fill="url(#bx)" stroke="#a04810" stroke-width="1"/>
<path d="M3 13.500 4.500 15.500H15.200L16.600 13.500Z" fill="#7a2c00"/>
<rect x="7" y="18" width="6" height="3" fill="#a8d8cc" stroke="#608878" stroke-width=".5"/>
<path d="M9.500 7C6.500 7.500 5.300 10 5 12.500L2 12 5.700 17.300 9.600 12.900 7.400 12.700C7.500 10.500 8.300 9 9.800 8.200Z" fill="#18d838" stroke="#10902a" stroke-width=".8"/>
</svg>
<!-- E-Mail statement -->
<svg style="left:1210px;top:368px" width="23" height="24" viewBox="0 0 23 24">
<defs><linearGradient id="pg" x1="0" y1="0" x2="1" y2="1"><stop offset="0" stop-color="#eef4fa"/><stop offset=".55" stop-color="#e8eef4"/><stop offset="1" stop-color="#b0b8c0"/></linearGradient>
<linearGradient id="ev2" x1="0" y1="0" x2="0" y2="1"><stop offset="0" stop-color="#d0d6dc"/><stop offset="1" stop-color="#a4acb4"/></linearGradient></defs>
<rect x="9.500" y="2.500" width="11" height="16" fill="url(#pg)" stroke="#84b4d4" stroke-width="1"/>
<path d="M9.500 18.800H20.500" stroke="#68808c" stroke-width="1"/>
<rect x="1.500" y="11.500" width="13" height="10.500" rx=".8" fill="url(#ev2)" stroke="#70787f" stroke-width="1.100"/>
<path d="M2 12 8 17.500 14 12M2 21.500 6.300 16.500M14 21.500 9.700 16.500" fill="none" stroke="#8c949c" stroke-width=".9"/>
</svg>
<!-- Patient validation -->
<svg style="left:1301px;top:369px" width="21" height="22" viewBox="0 0 21 22">
<path d="M1 16.500 4 15V4H20V20.500H4.500L4 18Z" fill="#ececec"/>
<path d="M4 18.200 4.500 20.500H20V18.500Z" fill="#a8aeb4"/>
<path d="M4 1.800Q4 1 5 1H19Q20 1 20 1.800V4.500H4Z" fill="#28a8e8"/><path d="M4 3.200H20V4.500H4Z" fill="#1880c8"/>
<rect x="6.300" y="6.800" width="5.400" height="6.200" rx=".8" fill="#fff" stroke="#9aa4b0" stroke-width=".9"/>
<rect x="7.800" y="8.300" width="2.400" height="1.400" fill="#222"/><rect x="7.300" y="9.700" width="3.400" height="1.100" fill="#d88050"/><rect x="6.800" y="11" width="4.400" height="1.500" fill="#48a8e0"/>
<g fill="#f04060"><rect x="13" y="6.500" width="1.200" height="1.200"/><rect x="13" y="8.600" width="1.200" height="1.200"/><rect x="13" y="10.700" width="1.200" height="1.200"/><rect x="13" y="12.800" width="1.200" height="1.200"/></g>
<g fill="#8c9498"><rect x="15.200" y="6.600" width="3.300" height="1"/><rect x="15.200" y="8.700" width="3.300" height="1"/><rect x="15.200" y="10.800" width="3.300" height="1"/><rect x="15.200" y="12.900" width="3.300" height="1"/></g>
<path d="M7 16.200H14.500" stroke="#b0b4b8" stroke-width="1.200"/>
</svg>
<!-- Payment cards -->
<svg style="left:1032px;top:408px" width="26" height="24" viewBox="0 0 26 24">
<defs><linearGradient id="cd" x1="0" y1="0" x2="1" y2="1"><stop offset="0" stop-color="#2c8ce0"/><stop offset=".5" stop-color="#1a70c8"/><stop offset="1" stop-color="#0e50a0"/></linearGradient></defs>
<g transform="rotate(28 12 14)"><rect x="4" y="6" width="18" height="12.500" rx="1.300" fill="#1458a8" stroke="#0c4080" stroke-width=".6"/></g>
<g transform="rotate(15 12 14)"><rect x="3" y="7" width="18" height="12.500" rx="1.300" fill="#2078c8" stroke="#0c4890" stroke-width=".6"/></g>
<rect x="2" y="8" width="18" height="12.800" rx="1.300" fill="url(#cd)" stroke="#0c4890" stroke-width=".6"/>
<path d="M10.500 10.200h6.300v2H10.500z" fill="#e8f0ff" opacity=".95"/><circle cx="10" cy="10" r=".7" fill="#ffb020"/>
<path d="M4 15.200h2M7 15.200h2M10 15.200h2M13 15.200h2" stroke="#88b8e8" stroke-width=".9"/>
<rect x="15" y="17" width="3" height="1.800" fill="#e8f0ff"/>
</svg>

</div></body></html>
